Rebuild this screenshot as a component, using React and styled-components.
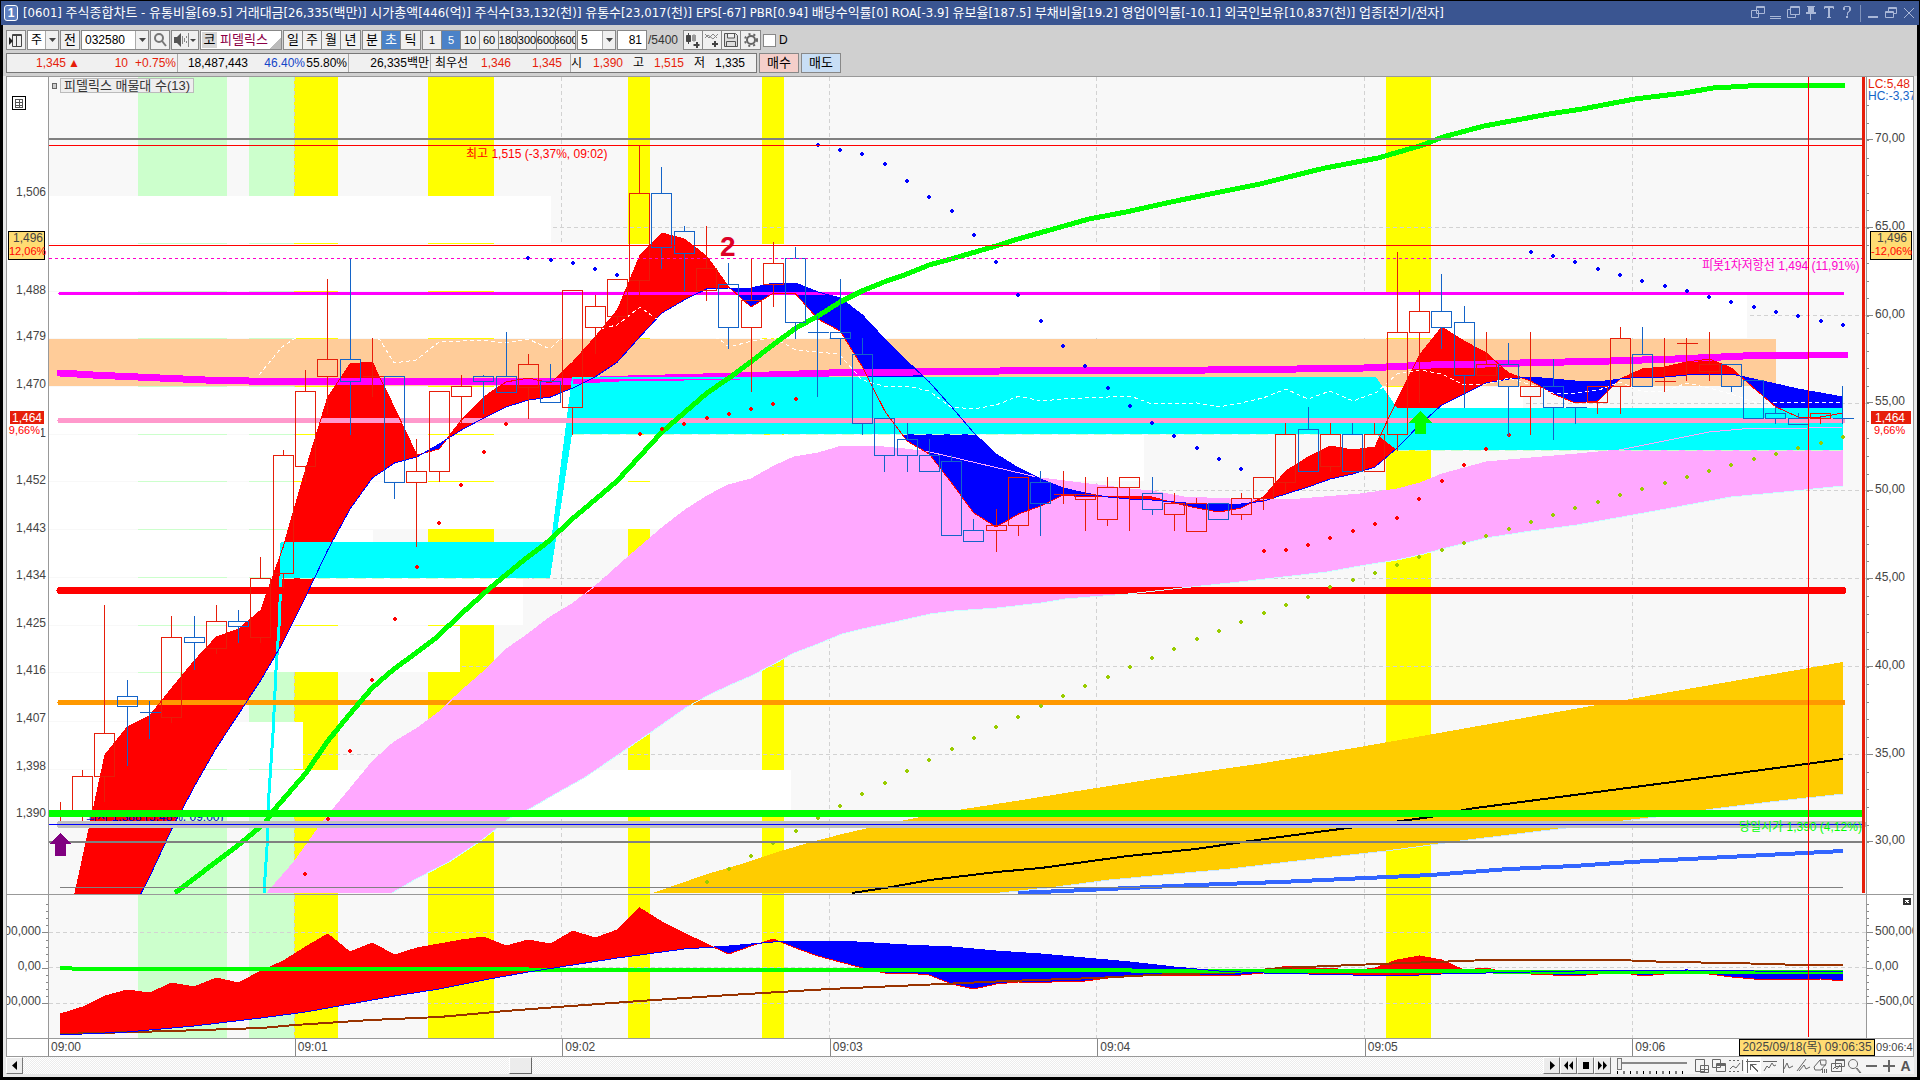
import React, { useState } from 'react';
import styled, { createGlobalStyle } from 'styled-components';

const RED = '#e61e0a';
const BLUE = '#1464c8';

/* ---------- chart data ---------- */

const barX = (i) => 60.4 + i * 22.28;

// index, high, top, bottom, low, up or down
const candles = [
    [0, 802, 812, 814, 824, 'u'], [1, 770, 776, 813, 824, 'u'], [2, 605, 733, 776, 802, 'u'],
    [3, 680, 696, 706, 766, 'd'], [4, 701, 712, 712, 739, 'd'], [5, 616, 637, 717, 723, 'u'],
    [6, 616, 637, 642, 670, 'd'], [7, 605, 621, 648, 654, 'u'], [8, 610, 621, 626, 643, 'd'],
    [9, 557, 578, 637, 643, 'u'], [10, 450, 455, 573, 588, 'u'], [11, 370, 391, 466, 482, 'u'],
    [12, 279, 359, 376, 414, 'u'], [13, 259, 359, 381, 435, 'd'], [14, 338, 376, 376, 397, 'u'],
    [15, 376, 376, 482, 499, 'd'], [16, 439, 471, 482, 547, 'u'], [17, 391, 391, 471, 482, 'u'],
    [18, 375, 386, 396, 423, 'u'], [19, 375, 376, 381, 414, 'd'], [20, 332, 376, 392, 392, 'd'],
    [21, 354, 364, 387, 419, 'u'], [22, 364, 381, 402, 402, 'd'], [23, 290, 290, 407, 435, 'u'],
    [24, 295, 306, 327, 354, 'u'], [25, 279, 279, 316, 322, 'u'], [26, 146, 193, 280, 295, 'u'],
    [27, 167, 193, 247, 269, 'd'], [28, 226, 231, 253, 291, 'd'], [29, 226, 268, 290, 301, 'u'],
    [30, 263, 284, 327, 349, 'd'], [31, 259, 300, 327, 392, 'u'], [32, 242, 263, 284, 307, 'u'],
    [33, 247, 258, 322, 339, 'd'], [34, 316, 332, 332, 397, 'd'], [35, 279, 332, 338, 365, 'd'],
    [36, 338, 354, 423, 435, 'd'], [37, 418, 418, 455, 472, 'd'], [38, 423, 439, 455, 472, 'd'],
    [39, 439, 455, 471, 471, 'd'], [40, 455, 461, 535, 535, 'd'], [41, 519, 530, 541, 541, 'd'],
    [42, 509, 525, 530, 552, 'u'], [43, 477, 477, 525, 536, 'u'], [44, 471, 482, 503, 536, 'd'],
    [45, 471, 494, 494, 504, 'u'], [46, 477, 494, 499, 531, 'u'], [47, 477, 487, 519, 526, 'u'],
    [48, 477, 477, 487, 531, 'u'], [49, 477, 493, 509, 515, 'd'], [50, 493, 503, 514, 531, 'u'],
    [51, 498, 503, 531, 531, 'u'], [52, 503, 503, 519, 519, 'd'], [53, 493, 498, 514, 520, 'u'],
    [54, 477, 477, 498, 510, 'u'], [55, 423, 434, 482, 493, 'u'], [56, 407, 429, 471, 471, 'd'],
    [57, 423, 434, 466, 472, 'u'], [58, 423, 434, 471, 471, 'd'], [59, 423, 434, 471, 471, 'u'],
    [60, 252, 332, 434, 451, 'u'], [61, 290, 311, 332, 403, 'u'], [62, 274, 311, 327, 349, 'd'],
    [63, 306, 322, 375, 408, 'd'], [64, 332, 364, 375, 375, 'u'], [65, 343, 364, 386, 436, 'd'],
    [66, 332, 386, 396, 435, 'u'], [67, 359, 386, 407, 440, 'd'], [68, 407, 407, 407, 424, 'd'],
    [69, 386, 386, 402, 414, 'u'], [70, 327, 338, 386, 414, 'u'], [71, 327, 354, 386, 386, 'd'],
    [72, 338, 381, 381, 392, 'u'], [73, 338, 343, 343, 381, 'u'], [74, 332, 364, 371, 381, 'u'],
    [75, 364, 364, 386, 392, 'd'], [76, 380, 380, 418, 418, 'd'], [77, 407, 413, 418, 424, 'd'],
    [78, 413, 418, 424, 424, 'd'], [79, 413, 413, 418, 424, 'u'], [80, 386, 418, 418, 424, 'd'],
];

const fastY = [
    960, 858, 755, 727, 716, 688, 661, 637, 629, 610, 547, 470, 397, 364, 362, 408, 455, 449, 420, 397,
    382, 378, 383, 362, 337, 310, 256, 233, 239, 256, 287, 307, 293, 294, 319, 331, 367, 411, 441, 454,
    483, 513, 527, 514, 506, 495, 497, 496, 496, 497, 503, 508, 512, 508, 497, 471, 457, 446, 450, 447,
    400, 355, 327, 341, 353, 373, 381, 394, 403, 401, 379, 369, 367, 362, 359, 368, 388, 407, 417, 417, 413,
];
const slowY = [
    1060, 1015, 965, 920, 877, 829, 787, 748, 714, 680, 642, 597, 550, 509, 478, 463, 457, 444, 430, 418,
    407, 400, 397, 388, 377, 362, 337, 313, 300, 289, 288, 288, 283, 283, 292, 298, 315, 339, 361, 382,
    407, 433, 454, 468, 479, 488, 493, 497, 499, 500, 502, 504, 505, 504, 501, 494, 487, 479, 474, 467,
    448, 425, 405, 394, 383, 379, 377, 379, 381, 382, 379, 377, 377, 375, 374, 374, 379, 384, 389, 393, 397,
];

const subFastY = [
    1014, 1007, 996, 990, 993, 983, 987, 978, 983, 971, 961, 947, 934, 952, 943, 955, 948, 944, 940, 937,
    946, 940, 944, 931, 938, 930, 908, 922, 933, 944, 954, 946, 939, 948, 956, 962, 968, 973, 973, 975,
    984, 989, 984, 982, 983, 981, 981, 978, 976, 975, 975, 975, 976, 975, 973, 966, 968, 968, 971, 968,
    960, 956, 960, 970, 968, 973, 974, 975, 976, 974, 972, 976, 974, 972, 974, 977, 979, 979, 980, 979, 981,
];
const subSlowKeys = [
    [0, 1035], [3, 1032], [6, 1026], [9, 1018], [11, 1012], [13, 1004], [15, 996], [17, 989], [19, 980],
    [21, 972], [23, 965], [25, 958], [28, 949], [30, 946], [32, 942], [33, 941], [35, 941], [38, 945],
    [40, 947], [42, 951], [44, 954], [46, 958], [48, 962], [50, 967], [52, 971], [54, 973], [58, 975],
    [60, 976], [62, 974], [64, 973], [68, 971], [73, 970], [76, 971], [80, 972],
];

const fillKeys = (keys) => {
    const out = [];
    keys.forEach(([i, y], n) => {
        out[i] = y;
        if (n > 0) {
            const [pi, py] = keys[n - 1];
            for (let k = pi + 1; k < i; k++) out[k] = py + ((y - py) * (k - pi)) / (i - pi);
        }
    });
    return out;
};
const subSlowY = fillKeys(subSlowKeys);

// area between two lines, split where they cross
const cloudPaths = (a, b) => {
    let up = '';
    let down = '';
    for (let i = 0; i < a.length - 1; i++) {
        const x0 = barX(i);
        const x1 = barX(i + 1);
        const d0 = b[i] - a[i];
        const d1 = b[i + 1] - a[i + 1];
        if (d0 * d1 < 0) {
            const t = d0 / (d0 - d1);
            const cx = x0 + (x1 - x0) * t;
            const cy = a[i] + (a[i + 1] - a[i]) * t;
            const left = `M${x0} ${a[i]}L${cx} ${cy}L${x0} ${b[i]}Z`;
            const right = `M${x1} ${a[i + 1]}L${cx} ${cy}L${x1} ${b[i + 1]}Z`;
            if (d0 > 0) { up += left; down += right; } else { down += left; up += right; }
        } else {
            const quad = `M${x0} ${a[i]}L${x1} ${a[i + 1]}L${x1} ${b[i + 1]}L${x0} ${b[i]}Z`;
            if (d0 + d1 > 0) up += quad; else down += quad;
        }
    }
    return { up, down };
};

const series = (ys) => ys.map((y, i) => `${barX(i)},${y}`).join(' ');

const cloud = cloudPaths(fastY, slowY);
const subCloud = cloudPaths(subFastY, subSlowY);

const pinkTop = '267,893 294,862 319,827 334,808 349,790 372,762 394,742 416,729 439,712 461,691 483,672 505,650 528,634 550,617 572,604 600,582 628,557 663,527 685,510 707,496 728,485 751,479 774,466 794,457 818,453 842,446 874,446 905,449 930,452 1041,478 1065,481 1130,489 1152,491 1184,497 1230,499 1288,500 1360,494 1397,489 1420,483 1442,474 1486,462 1531,458 1577,454 1598,452 1619,450 1644,445 1709,432 1742,429 1808,428 1843,427';
const pinkBottom = '392,893 416,879 449,862 482,840 510,818 531,808 557,793 584,778 612,759 628,748 650,733 687,707 709,695 728,686 751,676 774,664 794,653 818,644 842,634 862,629 886,624 930,614 954,611 997,608 1041,603 1065,599 1128,594 1182,588 1230,583 1283,577 1327,572 1360,566 1397,560 1420,555 1442,549 1486,538 1531,531 1577,525 1644,513 1731,497 1784,492 1843,486';
const goldTop = '653,893 707,874 745,863 774,853 808,843 842,834 864,829 910,819 964,809 1022,800 1065,793 1153,779 1264,763 1360,747 1653,695 1843,662';
const goldBottom = '1000,893 1056,887 1109,880 1174,874 1230,869 1288,862 1386,851 1460,841 1566,828 1656,817 1713,809 1770,802 1843,794';
const reversed = (pts) => pts.split(' ').reverse().join(' ');

const cyanBand = '281,542 551,542 572,377 1376,377 1397,408 1843,408 1843,450 1397,450 1376,434 572,434 550,578 281,578';
const cyanLead = '264,893 267,847 269,793 273,733 276,670 279,627 281,577 282,543';
const magentaCurve = '60,373 93,375 115,376 160,378 205,380 249,381 572,381 628,379 740,376 829,373 1000,371 1208,370 1297,369 1364,368 1386,367 1431,365 1486,364 1520,363 1565,362 1610,361 1675,359 1721,357 1743,356 1809,355 1845,355';
const greenCurve = '175,893 241,843 265,823 274,810 306,773 327,742 349,715 372,688 394,669 416,653 437,637 461,614 490,588 524,560 549,541 571,520 596,499 617,481 640,456 662,432 707,393 729,378 752,361 774,344 796,328 818,316 840,302 862,291 884,282 907,274 929,265 951,259 996,246 1018,239 1089,219 1126,212 1171,202 1220,192 1260,184 1280,179 1325,168 1378,158 1423,145 1443,137 1484,126 1549,114 1582,109 1635,99 1684,93 1713,88 1766,85 1831,85 1845,86';
const blackCurve = '852,893 891,887 930,880 997,872 1041,868 1128,856 1196,849 1250,841 1280,837 1378,824 1431,817 1468,809 1582,794 1680,781 1843,759';
const blueCurve = '1018,893 1107,889 1195,885 1280,882 1431,875 1509,869 1574,866 1631,862 1688,859 1766,855 1843,851';
const whiteCurve = '259,375 282,347 294,339 340,315 380,340 394,363 416,360 439,342 483,340 505,343 528,339 550,349 559,340 608,327 617,325 640,307 655,318 719,339 729,347 752,341 774,338 796,350 839,354 862,380 884,386 907,386 929,391 951,407 974,409 996,405 1019,396 1041,401 1063,399 1130,396 1152,404 1197,403 1219,407 1241,403 1263,398 1286,389 1308,399 1330,391 1353,401 1377,392 1397,374 1420,370 1442,374 1464,385 1486,384 1509,378 1531,385 1553,393 1576,393 1599,390 1620,382 1643,392 1665,391 1687,383 1709,388 1731,394 1754,402 1799,403 1843,402';
const brownCurve = '60,1034 171,1031 261,1028 295,1025 371,1020 439,1017 506,1011 571,1006 640,1001 730,995 829,989 942,984 1007,981 1096,978 1171,974 1230,973 1280,968 1329,966 1378,964 1435,962 1488,960 1619,960 1668,962 1733,963 1802,965 1843,965';
const zeroCurve = '60,968 83,969 528,969 530,970 1130,970 1133,971 1843,972';

const dots = [
    { color: '#0000ff', from: 21, ys: [258, 260, 263, 269, 275] },
    { color: '#0000ff', from: 34, ys: [145, 150, 154, 164, 181, 197, 211, 235, 262, 295, 321, 346, 366, 388, 406, 423, 436, 448, 459, 469] },
    { color: '#0000ff', from: 66, ys: [252, 256, 262, 269, 275, 281, 286, 291, 297, 302, 307, 312, 316, 321, 325] },
    { color: '#ff0000', from: 11, ys: [874, 819, 751, 680, 619, 567, 523, 485, 452, 424] },
    { color: '#ff0000', from: 26, ys: [434, 429, 424, 418, 414, 409, 404, 399] },
    { color: '#ff0000', from: 54, ys: [551, 550, 545, 538, 531, 524, 518, 499, 481, 465, 449, 435] },
    {
        color: '#99cc00', from: 29, ys: [882, 869, 856, 843, 831, 818, 806, 794, 783, 771, 760, 749, 738, 727, 717, 706, 696, 686, 677, 667,
            658, 649, 639, 631, 622, 613, 605, 597, 587, 580, 573, 565, 557, 550, 543, 536, 529, 522, 515, 508, 502, 495, 489, 483, 477, 471,
            465, 459, 454, 448, 443, 437],
    },
];

const bands = [
    [138, 227, '#ccffcc'], [249, 294, '#ccffcc'], [294, 338, '#ffff00'], [428, 494, '#ffff00'],
    [628, 650, '#ffff00'], [762, 784, '#ffff00'], [1386, 1431, '#ffff00'],
];

// volume profile rows: top, bottom, right edge
const profile = [
    [196, 243, 551], [244, 291, 1160], [292, 338, 1747], [339, 386, 1776, '#ffcc99'], [387, 434, 1523],
    [435, 481, 1144], [482, 529, 760], [530, 577, 373], [578, 625, 523], [626, 672, 460],
    [673, 721, 180], [722, 769, 303], [770, 817, 791],
];

const gridX = [294, 561, 829, 1096, 1364, 1632];
const gridY = [227, 315, 403, 490, 578, 666, 754];
const subGridY = [932, 967, 1003];

const priceLabels = [
    [192, '1,506'], [290, '1,488'], [336, '1,479'], [384, '1,470'], [433, '1,461'], [480, '1,452'], [528, '1,443'],
    [575, '1,434'], [623, '1,425'], [670, '1,416'], [718, '1,407'], [766, '1,398'], [813, '1,390'],
];
const scaleLabels = ['70,00', '65,00', '60,00', '55,00', '50,00', '45,00', '40,00', '35,00', '30,00'];

/* ---------- chart parts ---------- */

const HLine = ({ y, x1 = 49, x2 = 1863, color, w = 1, dash, cap }) => (
    <line x1={x1} x2={x2} y1={y + 0.5} y2={y + 0.5} stroke={color} strokeWidth={w} strokeDasharray={dash} strokeLinecap={cap} />
);

const Candle = ({ data }) => {
    const [i, high, top, bottom, low, dir] = data;
    const x = Math.floor(barX(i)) + 0.5;
    const color = dir === 'u' ? RED : BLUE;
    return (
        <g stroke={color} fill="none">
            <line x1={x} x2={x} y1={high} y2={top} />
            <line x1={x} x2={x} y1={bottom} y2={low} />
            {top === bottom
                ? <line x1={x - 10} x2={x + 11} y1={top + 0.5} y2={top + 0.5} />
                : <rect x={x - 10} y={top + 0.5} width="20" height={bottom - top} />}
        </g>
    );
};

const MainPlot = () => (
    <Plot viewBox="49 77 1817 817" preserveAspectRatio="none" role="img" aria-label="피델릭스 차트">
        {bands.map(([a, b, c]) => <rect key={a} x={a} y="77" width={b - a} height="817" fill={c} />)}
        <g stroke="#d2d2d2" strokeDasharray="4 3">
            {gridX.map((x) => <line key={x} x1={x + 0.5} x2={x + 0.5} y1="77" y2="894" />)}
            {gridY.map((y) => <line key={y} x1="49" x2="1866" y1={y + 0.5} y2={y + 0.5} />)}
        </g>
        {profile.map(([t, b, r, c]) => <rect key={t} x="49" y={t} width={r - 49} height={b - t} fill={c || '#fff'} />)}

        <polygon points={`${goldTop} ${reversed(goldBottom)}`} fill="#ffcc00" />
        <polyline points={goldBottom} fill="none" stroke="#cce6ff" />
        <polyline points={blackCurve} fill="none" stroke="#000" strokeWidth="2" />
        <polyline points={blueCurve} fill="none" stroke="#3366ff" strokeWidth="4" />

        <polygon points={`${pinkTop} ${reversed(pinkBottom)}`} fill="#ffa8ff" />

        <path d={cloud.up} fill="#ff0000" />
        <path d={cloud.down} fill="#0000ff" />
        <polyline points={magentaCurve} fill="none" stroke="#ff00ff" strokeWidth="7" strokeLinecap="round" strokeLinejoin="round" />
        <polygon points={cyanBand} fill="#00ffff" />
        <polyline points={cyanLead} fill="none" stroke="#00ffff" strokeWidth="3" />
        <polygon points="573,379 628,379 740,379 740,380 628,381 573,384" fill="#ff00ff" />
        <HLine y={434} x1={572} x2={1376} color="#ccffcc" dash="12 6" />
        <HLine y={450} x1={1397} x2={1843} color="#ccffcc" dash="12 6" />
        <HLine y={578} x1={282} x2={550} color="#ccffcc" dash="12 6" />

        <HLine y={590} x1={60} x2={1843} color="#ff0000" w={7} cap="round" />
        <HLine y={702} x1={60} x2={1843} color="#ff9900" w={5} cap="round" />
        <HLine y={420} x1={60} x2={1843} color="#ff99cc" w={5} cap="round" />
        <HLine y={293} x1={60} x2={1843} color="#ff00ff" w={3} cap="round" />
        <polyline points={pinkTop} fill="none" stroke="#ffa8ff" />
        <polyline points={pinkBottom} fill="none" stroke="#ccffff" />
        <polyline points={series(fastY)} fill="none" stroke="#ff0000" />
        <polyline points={series(slowY)} fill="none" stroke="#0000ff" />
        <polyline points={whiteCurve} fill="none" stroke="#fff" strokeDasharray="4 3" />

        <polyline points={greenCurve} fill="none" stroke="#00ff00" strokeWidth="5" strokeLinejoin="round" />
        {dots.map((d) => d.ys.map((y, n) => (
            <g key={`${d.from}-${n}`} fill={d.color}>
                <rect x={Math.round(barX(d.from + n)) - 2} y={y - 1} width="4" height="2" />
                <rect x={Math.round(barX(d.from + n)) - 1} y={y - 2} width="2" height="4" />
            </g>
        )))}
        {candles.map((c) => <Candle key={c[0]} data={c} />)}

        <ChartText x="86" y="821" fill="#0000c8">최저 1,388 (5,48%, 09:00)</ChartText>
        <line x1="49" x2="1863" y1="139" y2="139" stroke="#808080" strokeWidth="2" />
        <HLine y={145} color="#ff0000" />
        <HLine y={245} color="#ff0000" />
        <HLine y={258} color="#ff00cc" dash="3 3" />
        <HLine y={824} x1={60} color="#c0c0c0" w={7} cap="round" />
        <HLine y={824} color="#0000ff" />
        <HLine y={813} color="#00ff00" w={7} />
        <line x1="49" x2="1863" y1="842" y2="842" stroke="#808080" strokeWidth="2" />
        <HLine y={887} x1={60} x2={1843} color="#808080" />

        <polygon points="60,833 72,844 66,844 66,856 55,856 55,844 49,844" fill="#800080" />
        <polygon points="1420,411 1432,423 1426,423 1426,434 1415,434 1415,423 1409,423" fill="#00ff00" />
        <SignalText x="720" y="256">2</SignalText>
        <ChartText x="466" y="158" fill="#ff0000">최고 1,515 (-3,37%, 09:02)</ChartText>
        <ChartText x="1702" y="270" fill="#ff00cc">피봇1차저항선 1,494 (11,91%)</ChartText>
        <ChartText x="1739" y="831" fill="#00ff00">당일시가 1,390 (4,12%)</ChartText>

        <line x1="1808.5" x2="1808.5" y1="77" y2="894" stroke="#ff0000" />
        <rect x="1862" y="77" width="3" height="816" fill={RED} />
    </Plot>
);

const SubPlot = () => (
    <Plot viewBox="49 895 1817 143" preserveAspectRatio="none" role="img" aria-label="보조지표">
        {bands.map(([a, b, c]) => <rect key={a} x={a} y="895" width={b - a} height="143" fill={c} />)}
        <g stroke="#d2d2d2" strokeDasharray="4 3">
            {gridX.map((x) => <line key={x} x1={x + 0.5} x2={x + 0.5} y1="895" y2="1038" />)}
            {subGridY.map((y) => <line key={y} x1="49" x2="1866" y1={y + 0.5} y2={y + 0.5} />)}
        </g>
        <path d={subCloud.up} fill="#ff0000" />
        <path d={subCloud.down} fill="#0000ff" />
        <polyline points={series(subFastY)} fill="none" stroke="#ff0000" />
        <polyline points={brownCurve} fill="none" stroke="#993300" strokeWidth="2" />
        <polyline points={zeroCurve} fill="none" stroke="#00ff00" strokeWidth="4" />
        <polyline points={series(subSlowY)} fill="none" stroke="#0000ff" />
        <line x1="1808.5" x2="1808.5" y1="895" y2="1037" stroke="#ff0000" />
    </Plot>
);

const LeftAxis = () => (
    <Plot viewBox="7 77 41 817" preserveAspectRatio="none" $bg="#fff">
        <rect x="12.5" y="96.5" width="13" height="13" fill="#fff" stroke="#000" />
        <path d="M15 99.5h8M15 102.5h8M15 105.5h8M15.5 99v8M19.5 99v8M22.5 99v8M15 107.5h8" stroke="#555" fill="none" />
        {priceLabels.map(([y, t]) => <AxisText key={y} x="46" y={y + 4} textAnchor="end">{t}</AxisText>)}
        <rect x="8.5" y="231.5" width="36" height="28" fill="#ffdc73" stroke="#000" />
        <AxisText x="13" y="242">1,496</AxisText>
        <BadgeText x="9" y="255" $color="#ff0000">12,06%</BadgeText>
        <rect x="7" y="425" width="34" height="14" fill="#fff" />
        <rect x="10" y="411" width="34" height="13" fill={RED} />
        <AxisText x="12" y="422" $color="#fff">1,464</AxisText>
        <BadgeText x="40" y="434" textAnchor="end" $color="#ff0000">9,66%</BadgeText>
    </Plot>
);

const minorTicks = Array.from({ length: 43 }, (_, n) => 105 + Math.round(n * 17.55));
const subTicks = Array.from({ length: 15 }, (_, n) => 904 + Math.round(n * 7.1));

const RightAxis = () => (
    <Plot viewBox="1867 77 46 817" preserveAspectRatio="none" $bg="#fff">
        <g stroke="#888">
            {minorTicks.map((y) => <line key={y} x1="1867" x2="1869" y1={y + 0.5} y2={y + 0.5} />)}
            {scaleLabels.map((t, n) => {
                const y = 139.5 + Math.round(n * 87.8);
                return <line key={t} x1="1867" x2="1873" y1={y} y2={y} />;
            })}
        </g>
        <AxisText x="1868" y="88" $color={RED}>LC:5,48</AxisText>
        <AxisText x="1868" y="100" $color={BLUE}>HC:-3,37</AxisText>
        {scaleLabels.map((t, n) => <AxisText key={t} x="1875" y={142 + Math.round(n * 87.8)}>{t}</AxisText>)}
        <rect x="1870.5" y="231.5" width="41" height="28" fill="#ffdc73" stroke="#000" />
        <AxisText x="1877" y="242">1,496</AxisText>
        <BadgeText x="1871" y="255" $color="#ff0000">-12,06%</BadgeText>
        <rect x="1871" y="411" width="40" height="13" fill={RED} />
        <AxisText x="1875" y="422" $color="#fff">1,464</AxisText>
        <BadgeText x="1874" y="434" $color="#ff0000">9,66%</BadgeText>
    </Plot>
);

const SubAxis = ({ right }) => (
    <Plot viewBox={right ? '1867 895 46 143' : '7 895 41 143'} preserveAspectRatio="none" $bg="#fff">
        <g stroke="#888">
            {subTicks.map((y, n) => {
                const len = n % 5 === 4 ? 6 : 2;
                return right
                    ? <line key={y} x1="1867" x2={1867 + len} y1={y + 0.5} y2={y + 0.5} />
                    : <line key={y} x1={48 - len} x2="48" y1={y + 0.5} y2={y + 0.5} />;
            })}
        </g>
        {right
            ? ['500,000', '0,00', '-500,000'].map((t, n) => <AxisText key={t} x="1875" y={935 + n * 35}>{t}</AxisText>)
            : ['00,000', '0,00', '00,000'].map((t, n) => <AxisText key={n} x="41" y={935 + n * 35} textAnchor="end">{t}</AxisText>)}
        {right && (
            <g>
                <rect x="1903" y="898" width="8" height="7" fill="#333" />
                <path d="M1905 900l4 3M1909 900l-4 3" stroke="#fff" />
            </g>
        )}
    </Plot>
);

/* ---------- window parts ---------- */

const titleText = '[0601] 주식종합차트 - 유통비율[69.5] 거래대금[26,335(백만)] 시가총액[446(억)] 주식수[33,132(천)] 유통수[23,017(천)] EPS[-67] PBR[0.94] 배당수익률[0] ROA[-3.9] 유보율[187.5] 부채비율[19.2] 영업이익률[-10.1] 외국인보유[10,837(천)] 업종[전기/전자]';

const windowIcons = [
    ['새창', 'M6.5 1.5h8v7h-8zM1.5 5.5h7v7h-7zM6 2.5h9'],
    ['접기', 'M2 11.5h11M2 13.5h11'],
    ['복사', 'M4.5 1.5h9v8h-9zM4 4.5H1.5v8h8V10M4 2.5h10'],
    ['고정', 'M3 1.5h8M4.5 2v5M5.5 2v5M6.5 2v5M7.5 2v5M8.5 2v5M9.5 2v5M2 7.5h10M2 8.5h10M6.5 9v6'],
    ['글꼴', 'M2.5 4V1.5h9V4M3 2.5h8M6.5 2v10M7.5 2v10M5 12.5h4'],
    ['도움말', 'M3.5 5V2.5h1V1.5h5v1h1v3h-1v1h-1v1h-1v3M4.5 5V2.5M9.5 2v4M7.5 11v2M6.5 11v2'],
];
const frameIcons = [
    ['최소화', 'M2 11.5h10M2 12.5h10'],
    ['이전 크기로', 'M4.5 6V2.5h8v6H10M4 3.5h9M1.5 6.5h8v6h-8zM1 7.5h9'],
    ['닫기', 'M2 3l10 10M12 3L2 13'],
];

const toolIcons = [
    ['영역 추가', 'M1.5 1.5h9v12h-9zM6.5 7.5h8v7h-8zM10.5 8v6M7 11.5h7'],
    ['영역 복사', 'M1.5 1.5h8v8h-8zM5.5 5.5h9v8h-9zM6 6.5h8M6 7.5h8'],
    ['축 보기', 'M1 2.5h2M5 2.5h2M9 2.5h2M1 13.5h2M5 13.5h2M9 13.5h2M2 11l3-3 3 2 4-5M14.5 2v11'],
    ['십자선', 'M2.5 1v14M1 3.5h14M5.5 6.5h6M5.5 6v6M6 7l7 7M7 7l6 6'],
    ['수평선', 'M1 3.5h14M2 13l3-5 2 2 3-5 2 3 2-1'],
    ['수직선', 'M4.5 1v14M5 11l3-6 2 5 4-2'],
    ['추세선', 'M1 13l9-12M3 13l5-6 2 4 4-2'],
    ['모두 지우기', 'M1 9l6-7h6v4l-5 6H2zM7 2l1 5h5M9.5 15v-4M11.5 15v-4M13.5 15v-4'],
    ['차트 저장', 'M5.5 1.5h9v7h-9zM1.5 5.5h10v8h-10zM3 11l2-2 2 2 3-4M6 2.5h8'],
    ['돋보기', 'M6 1.5a4.5 4.5 0 1 0 .1 0M9 10l4 5M10 10l4 5'],
    ['축소', 'M2 8.5h11M2 7.5h11'],
    ['확대', 'M2 8.5h12M2 7.5h12M7.5 2v12M8.5 2v12'],
];

const LineIcon = ({ d, color }) => (
    <svg width="15" height="16" viewBox="0 0 15 16" aria-hidden="true">
        <path d={d} fill="none" stroke={color} />
    </svg>
);

const Chevron = () => (
    <svg width="7" height="4" viewBox="0 0 7 4" aria-hidden="true"><path d="M0 0h7L3.5 4z" fill="#444" /></svg>
);

const Combo = ({ label, value, options, width }) => (
    <ComboBox $width={width}>
        <select aria-label={label} defaultValue={value}>
            {options.map((o) => <option key={o}>{o}</option>)}
        </select>
        <ComboArrow><Chevron /></ComboArrow>
    </ComboBox>
);

const Segments = ({ items, active, onPick, small }) => (
    <Group>
        {items.map((t) => (
            <Segment key={t} type="button" $on={t === active} $small={small} onClick={() => onPick(t)}>{t}</Segment>
        ))}
    </Group>
);

const periods = ['일', '주', '월', '년'];
const units = ['분', '초', '틱'];
const steps = ['1', '5', '10', '60', '180', '300', '600', '3600'];

const Toolbar = () => {
    const [unit, setUnit] = useState('초');
    const [step, setStep] = useState('5');

    return (
        <ToolRow>
            <ToolButton type="button" aria-label="메뉴" $width={20}>
                <svg width="16" height="16" viewBox="0 0 16 16"><path d="M4.5 14.5v-12h9v12zM5 3.5h8M8.5 4v10" fill="none" stroke="#444" /><path d="M1 5l4 4-4 4z" fill="#222" /></svg>
            </ToolButton>
            <Combo label="구분" value="주" options={['주', '선', '옵']} width={32} />
            <ToolButton type="button" $width={20}>전</ToolButton>
            <Combo label="종목코드" value="032580" options={['032580']} width={68} />
            <ToolButton type="button" aria-label="종목검색" $width={20}>
                <svg width="14" height="14" viewBox="0 0 14 14" fill="none" stroke="#777" strokeWidth="2"><circle cx="6" cy="5" r="4" /><path d="M9 8l4 5" /></svg>
            </ToolButton>
            <ToolButton type="button" aria-label="소리" $width={28}>
                <svg width="24" height="14" viewBox="0 0 24 14"><path d="M1 4h3l4-4v14l-4-4H1z" fill="#555" /><path d="M9.5 3v8M11.5 5v4M13.5 3v2M13.5 8v2M15.5 0v14" stroke="#888" /><path d="M17 6h6l-3 3z" fill="#444" /></svg>
            </ToolButton>
            <StockName><mark>코</mark>피델릭스</StockName>
            <Segments items={periods} onPick={() => {}} />
            <Segments items={units} active={unit} onPick={setUnit} />
            <Segments items={steps} active={step} onPick={setStep} small />
            <Combo label="간격" value="5" options={['5', '10']} width={39} />
            <CountInput aria-label="봉 개수" defaultValue="81" />
            <Total>/5400</Total>
            <Group>
                <Segment type="button" aria-label="종목 추가">
                    <svg width="16" height="16" viewBox="0 0 16 16"><path d="M1.5 3.5h4v6h-4zM3.5 1v11M11.5 10v6M8.5 13.5h6M12.500 10v6M8.5 12.500h6" fill="#444" stroke="#444" /><path d="M7 3h4v6H7zM8.500 2h1v8h-1z" fill="#999" /></svg>
                </Segment>
                <Segment type="button" aria-label="지표 추가">
                    <svg width="16" height="16" viewBox="0 0 16 16"><path d="M1 6l3-3 5 4 5-5M1 2l4 4 4-4 4 4" fill="none" stroke="#888" /><path d="M11 9v6M8 12h6" stroke="#444" strokeWidth="2" /></svg>
                </Segment>
                <Segment type="button" aria-label="저장">
                    <svg width="16" height="16" viewBox="0 0 16 16"><path d="M1.5 1.5h11l2 2v11h-13zM4.5 2v4h7V2M3.5 14V9.5h9V14" fill="#ddd" stroke="#555" /></svg>
                </Segment>
                <Segment type="button" aria-label="설정">
                    <svg width="14" height="14" viewBox="0 0 14 14" fill="none" stroke="#666"><circle cx="7" cy="7" r="4" strokeWidth="2" /><circle cx="7" cy="7" r="6" strokeWidth="2" strokeDasharray="2 3" /></svg>
                </Segment>
            </Group>
            <CheckLabel><input type="checkbox" />D</CheckLabel>
        </ToolRow>
    );
};

const QuoteRow = () => (
    <ToolRow>
        <QuoteBox>
            <Quote $w={60} $color={RED}>1,345</Quote>
            <Quote $w={14} $color={RED}>▲</Quote>
            <Quote $w={48} $color={RED}>10</Quote>
            <Quote $w={49} $color={RED} $line>+0.75%</Quote>
            <Quote $w={71}>18,487,443</Quote>
            <Quote $w={57} $color="#1446c8">46.40%</Quote>
            <Quote $w={43} $line>55.80%</Quote>
            <Quote $w={82} $line>26,335백만</Quote>
            <Quote $w={38}>최우선</Quote>
            <Quote $w={43} $color={RED}>1,346</Quote>
            <Quote $w={59} $color={RED} $line $gap={8}>1,345</Quote>
            <Quote $w={12}>시</Quote>
            <Quote $w={41} $color={RED}>1,390</Quote>
            <Quote $w={21}>고</Quote>
            <Quote $w={40} $color={RED}>1,515</Quote>
            <Quote $w={21}>저</Quote>
            <Quote $w={40}>1,335</Quote>
        </QuoteBox>
        <OrderButton type="button" $bg="#f5cfca">매수</OrderButton>
        <OrderButton type="button" $bg="#c8def5">매도</OrderButton>
    </ToolRow>
);

const timeCells = ['09:01', '09:02', '09:03', '09:04', '09:05'];

const BottomBar = () => (
    <Bottom>
        <PlayButton type="button" aria-label="왼쪽으로"><svg width="8" height="9"><path d="M6 0v9L1 4.5z" /></svg></PlayButton>
        <Track><Thumb /></Track>
        <PlayButton type="button" aria-label="재생"><svg width="8" height="9"><path d="M2 0v9l5-4.5z" /></svg></PlayButton>
        <PlayButton type="button" aria-label="뒤로"><svg width="9" height="9"><path d="M4 0v9L0 4.5zM9 0v9L5 4.5z" /></svg></PlayButton>
        <PlayButton type="button" aria-label="정지"><svg width="8" height="9"><path d="M1 1h6v7H1z" /></svg></PlayButton>
        <PlayButton type="button" aria-label="앞으로"><svg width="9" height="9"><path d="M0 0v9l4-4.5zM5 0v9l4-4.5z" /></svg></PlayButton>
        <SpeedBox>
            <SpeedSlider type="range" min="0" max="10" defaultValue="0" aria-label="속도" />
            <svg width="67" height="3">
                {Array.from({ length: 11 }, (_, n) => <rect key={n} x={n * 6.5} y="0" width="1" height="3" />)}
            </svg>
        </SpeedBox>
        <ToolIcons>
            {toolIcons.map(([name, d]) => (
                <IconButton key={name} type="button" aria-label={name} $lit={name === '십자선'}><LineIcon d={d} color="#666" /></IconButton>
            ))}
            <IconButton type="button"><b>A</b></IconButton>
        </ToolIcons>
    </Bottom>
);

const App = () => (
    <Window>
        <GlobalStyle />
        <TitleBar>
            <WindowNumber>1</WindowNumber>
            <Title>{titleText}</Title>
            <TitleIcons>
                {windowIcons.map(([name, d]) => (
                    <IconButton key={name} type="button" aria-label={name}><LineIcon d={d} color="#aab8d8" /></IconButton>
                ))}
                <Divider />
                {frameIcons.map(([name, d]) => (
                    <IconButton key={name} type="button" aria-label={name}><LineIcon d={d} color="#aab8d8" /></IconButton>
                ))}
            </TitleIcons>
        </TitleBar>
        <Body>
            <Tools>
                <Toolbar />
                <QuoteRow />
            </Tools>
            <ChartGrid>
                <LeftAxis />
                <PlotCell>
                    <MainPlot />
                    <Legend><i />
                        <button type="button">피델릭스 매물대 수(13)</button>
                    </Legend>
                </PlotCell>
                <RightAxis />
                <SubAxis />
                <SubPlot />
                <SubAxis right />
                <TimeRow>
                    <TimeCell $grow={246}>09:00</TimeCell>
                    {timeCells.map((t) => <TimeCell key={t} $grow={267}>{t}</TimeCell>)}
                    <TimeCell $grow={234}>09:06</TimeCell>
                    <LastTime>09:06:4</LastTime>
                    <TimeBadge>2025/09/18(목) 09:06:35</TimeBadge>
                </TimeRow>
            </ChartGrid>
            <BottomBar />
        </Body>
    </Window>
);

/* ---------- styles ---------- */

const GlobalStyle = createGlobalStyle`
	* { box-sizing: border-box; }
	body { margin: 0; background: #000; }
	body, button, input, select, text {
		font-family: "Liberation Sans", "Noto Sans CJK KR", sans-serif;
		font-size: 12px;
		line-height: 16px;
	}
	button, input, select { color: #000; padding: 0; margin: 0; border-radius: 0; }
`;

const Window = styled.div`
	display: flex;
	flex-direction: column;
	min-height: 100vh;
	height: 100vh;
	padding: 1px 0 3px;
	background: #000;
	overflow: hidden;
`;

const TitleBar = styled.header`
	display: flex;
	align-items: center;
	flex: none;
	height: 24px;
	margin: 0 1px;
	padding: 0 1px 0 3px;
	background: #3a5591;
	color: #fff;
`;

const WindowNumber = styled.span`
	width: 14px;
	height: 16px;
	border: 1px solid #fff;
	border-radius: 3px;
	background: #5f7fc0;
	font-weight: bold;
	line-height: 14px;
	text-align: center;
`;

const Title = styled.h1`
	flex: 1;
	margin: 0 0 0 5px;
	font-family: "DejaVu Sans Condensed", "Noto Sans", "Noto Sans CJK KR", sans-serif;
	font-size: 13px;
	font-weight: normal;
	white-space: nowrap;
	overflow: hidden;
`;

const TitleIcons = styled.div`
	display: flex;
	align-items: center;
	gap: 1px;
`;

const Divider = styled.span`
	width: 1px;
	height: 17px;
	margin: 0 3px;
	background: #7f92bb;
`;

const IconButton = styled.button`
	display: flex;
	align-items: center;
	justify-content: center;
	width: 17px;
	height: 17px;
	border: 0;
	background: ${(p) => (p.$lit ? '#fff' : 'none')};
	cursor: pointer;

	b {
		color: #555;
		font-size: 14px;
	}
`;

const Body = styled.main`
	display: flex;
	flex-direction: column;
	flex: 1;
	min-height: 0;
	margin: 0 3px;
	padding: 0 3px 3px;
	background: #e8e8e8;
`;

const Tools = styled.div`
	display: flex;
	flex-direction: column;
	flex: none;
	gap: 3px;
	margin: 0 -3px;
	padding: 5px 3px 3px;
	background: #d0d0d0;
`;

const ToolRow = styled.div`
	display: flex;
	align-items: stretch;
	gap: 1px;
	height: 20px;
	white-space: nowrap;
`;

const ToolButton = styled.button`
	display: flex;
	align-items: center;
	justify-content: center;
	flex: none;
	width: ${(p) => p.$width}px;
	border: 1px solid #888;
	background: #f0f0f0;
	font-size: 13px;
`;

const ComboBox = styled.span`
	position: relative;
	flex: none;
	width: ${(p) => p.$width}px;

	select {
		width: 100%;
		height: 20px;
		padding: 0 0 0 3px;
		border: 1px solid #888;
		background: #fff;
		appearance: none;
		outline: none;
	}
`;

const ComboArrow = styled.span`
	position: absolute;
	top: 1px;
	right: 1px;
	display: flex;
	align-items: center;
	justify-content: center;
	width: 13px;
	height: 18px;
	border-left: 1px solid #aaa;
	background: #f0f0f0;
	pointer-events: none;
`;

const StockName = styled.div`
	display: flex;
	align-items: center;
	gap: 3px;
	width: 82px;
	padding: 0 1px;
	border: 1px solid #888;
	background: linear-gradient(135deg, transparent 88%, #bbb 88%) #fff;
	color: #8c0046;
	font-size: 13px;

	mark {
		width: 15px;
		background: #d8d8d8;
		color: #000;
		text-align: center;
	}
`;

const Group = styled.div`
	display: flex;
	flex: none;
	border: 1px solid #888;
`;

const Segment = styled.button`
	display: flex;
	align-items: center;
	justify-content: center;
	width: 19px;
	border: 0;
	border-right: 1px solid #888;
	background: ${(p) => (p.$on ? '#4b82c8' : '#f0f0f0')};
	color: ${(p) => (p.$on ? '#fff' : '#000')};
	font-size: ${(p) => (p.$small ? 11 : 13)}px;
	overflow: hidden;

	&:last-child {
		border-right: 0;
	}
`;

const CountInput = styled.input`
	width: 30px;
	border: 1px solid #888;
	background: #fff;
	text-align: right;
	padding-right: 4px;
	outline: none;
`;

const Total = styled.span`
	width: 34px;
	line-height: 20px;
	color: #333;
`;

const CheckLabel = styled.label`
	display: flex;
	align-items: center;
	gap: 3px;
	margin-left: 1px;

	input {
		width: 13px;
		height: 13px;
		border: 1px solid #888;
		background: #fff;
		appearance: none;
	}
`;

const QuoteBox = styled.div`
	display: flex;
	align-items: center;
	width: 751px;
	border: 1px solid #777;
	background: #f0f0f0;
`;

const Quote = styled.span`
	flex: none;
	width: ${(p) => p.$w}px;
	padding-right: ${(p) => p.$gap || 1}px;
	border-right: ${(p) => (p.$line ? '1px solid #aaa' : '0')};
	color: ${(p) => p.$color || '#000'};
	line-height: 18px;
	text-align: right;
`;

const OrderButton = styled.button`
	width: 40px;
	margin-left: 1px;
	border: 1px solid #888;
	background: ${(p) => p.$bg};
	font-size: 13px;
`;

const ChartGrid = styled.section`
	display: grid;
	grid-template-columns: 41px minmax(0, 1fr) 46px;
	grid-template-rows: minmax(0, 817fr) minmax(0, 143fr) 17px;
	gap: 1px;
	flex: 1;
	min-height: 0;
	border: 1px solid #999;
	background: #999;
`;

const Plot = styled.svg`
	display: block;
	width: 100%;
	height: 100%;
	min-height: 0;
	background: ${(p) => p.$bg || '#f8f8f8'};
	overflow: hidden;
	shape-rendering: crispEdges;
`;

const PlotCell = styled.div`
	position: relative;
	min-height: 0;
`;

const ChartText = styled.text`
	font-size: 12px;
`;

const AxisText = styled.text`
	fill: ${(p) => p.$color || '#444'};
	font-size: 12px;
`;

const BadgeText = styled(AxisText)`
	font-size: 11px;
`;

const SignalText = styled.text`
	fill: #dc0028;
	font-size: 28px;
	font-weight: bold;
`;

const Legend = styled.div`
	position: absolute;
	top: 1px;
	left: 3px;
	display: flex;
	align-items: center;
	gap: 3px;

	i {
		width: 5px;
		height: 6px;
		border: 1px solid #666;
		background: #ccc;
	}

	button {
		height: 15px;
		padding: 0 3px;
		border: 1px solid #bbb;
		background: #eee;
		color: #333;
		font-size: 13px;
		line-height: 12px;
	}
`;

const TimeRow = styled.div`
	position: relative;
	grid-column: 1 / -1;
	display: flex;
	padding-left: 41px;
	background: #fff;
`;

const TimeCell = styled.span`
	flex: ${(p) => p.$grow} 1 0;
	border-left: 1px solid #888;
	padding-left: 2px;
	color: #444;
`;

const LastTime = styled.span`
	flex: none;
	width: 46px;
	padding-left: 8px;
	border-left: 1px solid #888;
	color: #444;
	font-size: 11px;
	white-space: nowrap;
	overflow: hidden;
`;

const TimeBadge = styled.span`
	position: absolute;
	top: 0;
	right: 38px;
	width: 136px;
	height: 17px;
	border: 1px solid #000;
	background: #ffdc73;
	color: #444;
	line-height: 15px;
	text-align: center;
	white-space: nowrap;
`;

const Bottom = styled.footer`
	display: flex;
	flex: none;
	height: 17px;
	background: #f4f4f4;
`;

const PlayButton = styled.button`
	display: flex;
	align-items: center;
	justify-content: center;
	flex: none;
	width: 17px;
	border: 1px solid;
	border-color: #fff #777 #777 #fff;
	background: #ececec;
`;

const Track = styled.div`
	flex: 1;
	background: repeating-conic-gradient(#ececec 0 25%, #fff 0 50%) 0 0 / 2px 2px;
`;

const Thumb = styled.div`
	width: 23px;
	height: 17px;
	margin-left: 32%;
	border: 1px solid;
	border-color: #fff #666 #666 #fff;
	background: #ececec;
`;

const SpeedBox = styled.div`
	display: flex;
	flex-direction: column;
	justify-content: space-between;
	width: 70px;
	margin: 0 6px;
`;

const SpeedSlider = styled.input`
	width: 70px;
	height: 13px;
	appearance: none;
	background: linear-gradient(#888, #888) 0 5px / 100% 2px no-repeat;

	&::-webkit-slider-thumb {
		appearance: none;
		width: 5px;
		height: 12px;
		border: 1px solid #777;
		background: #eee;
	}
`;

const ToolIcons = styled.div`
	display: flex;
`;

export default App;
